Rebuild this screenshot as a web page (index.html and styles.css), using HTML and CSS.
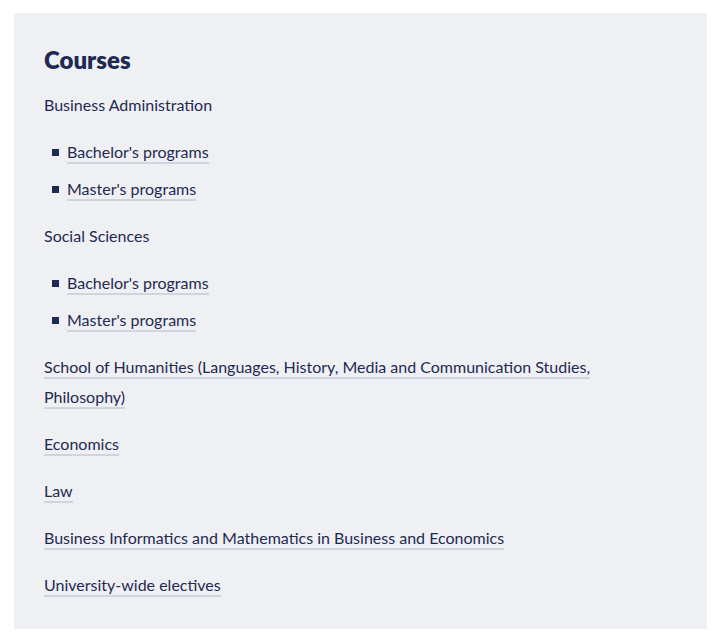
FILE: index.html
```html
<!DOCTYPE html>
<html lang="en">
<head>
    <meta charset="UTF-8">
    <meta name="viewport" content="width=device-width, initial-scale=1.0">
    <title>Courses</title>
    <link rel="stylesheet" href="styles.css">
</head>
<body>
    <div class="courses-box">
        <h2>Courses</h2>
        <ul class="course-list">
            <li>
                <span class="group">Business Administration</span>
                <ul class="sub-list">
                    <li><a href="#">Bachelor's programs</a></li>
                    <li><a href="#">Master's programs</a></li>
                </ul>
            </li>
            <li>
                <span class="group">Social Sciences</span>
                <ul class="sub-list">
                    <li><a href="#">Bachelor's programs</a></li>
                    <li><a href="#">Master's programs</a></li>
                </ul>
            </li>
            <li><a href="#">School of Humanities (Languages, History, Media and Communication Studies, Philosophy)</a></li>
            <li><a href="#">Economics</a></li>
            <li><a href="#">Law</a></li>
            <li><a href="#">Business Informatics and Mathematics in Business and Economics</a></li>
            <li><a href="#">University-wide electives</a></li>
        </ul>
    </div>
</body>
</html>
```

FILE: styles.css
```css
body {
    margin: 13px 13px 0 14px;
    font-family: 'Lato', 'Open Sans', sans-serif;
    color: #1f2a50;
}

.courses-box {
    background-color: #eff0f4;
    padding: 32px 30px 29px 30px;
}

h2 {
    margin: 0 0 15px 0;
    font-size: 24px;
    line-height: 30px;
    font-weight: 800;
}

.course-list,
.sub-list {
    list-style: none;
    margin: 0;
    padding: 0;
    font-size: 16px;
    line-height: 30px;
}

.course-list {
    max-width: 600px;
}

.course-list > li {
    margin-bottom: 17px;
}

.course-list > li:last-child {
    margin-bottom: 0;
}

.sub-list {
    margin-top: 17px;
}

.sub-list li {
    position: relative;
    padding-left: 23px;
    margin-bottom: 7px;
}

.sub-list li:last-child {
    margin-bottom: 0;
}

.sub-list li::before {
    content: '';
    position: absolute;
    left: 8px;
    top: 12px;
    width: 7px;
    height: 7px;
    background-color: #1f2a50;
}

a {
    color: #1f2a50;
    text-decoration: none;
    border-bottom: 2px solid #cfd5df;
    padding-bottom: 1px;
}
```
